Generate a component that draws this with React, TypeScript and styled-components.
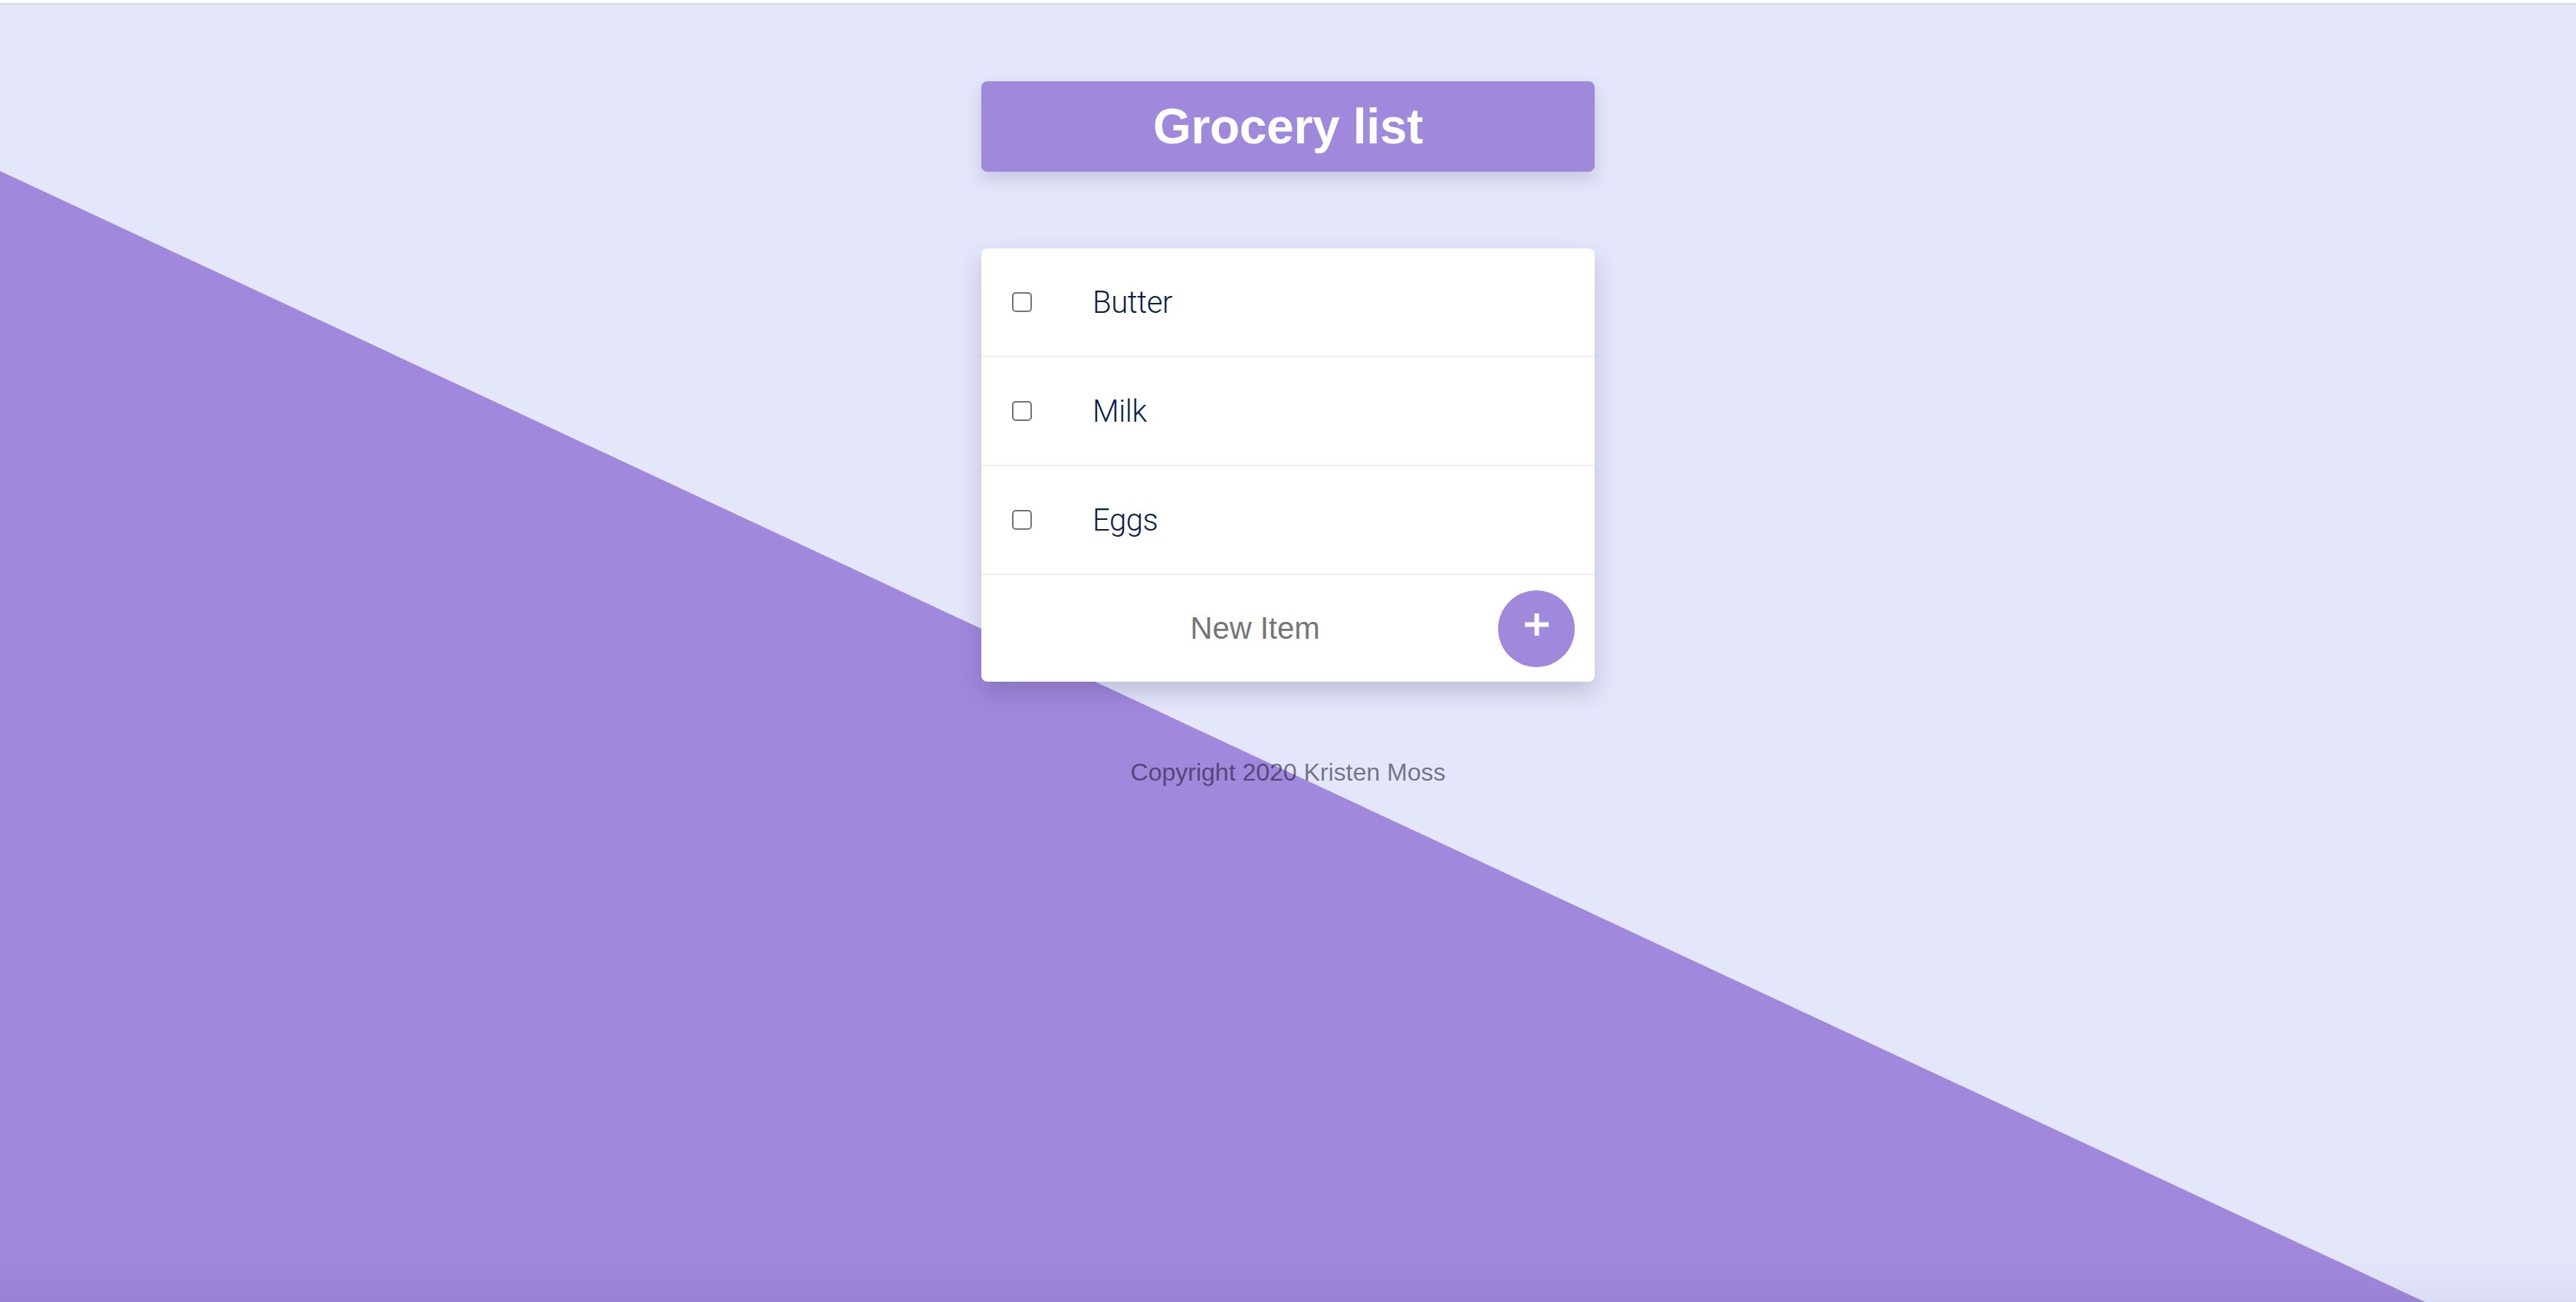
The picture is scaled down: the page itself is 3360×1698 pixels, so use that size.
import React from "react";
import styled, { createGlobalStyle } from "styled-components";

const GlobalStyle = createGlobalStyle`
  html, body {
    margin: 0;
    padding: 0;
    background: #e4e7fa;
  }
  * { box-sizing: border-box; }
`;

const Page = styled.div`
  position: relative;
  min-height: 100vh;
  overflow: hidden;
  background: #e4e7fa;
  font-family: "Liberation Sans", Arial, sans-serif;
  display: flex;
  flex-direction: column;

  &::before {
    content: "";
    position: absolute;
    inset: 0;
    background: #a088dc;
    clip-path: polygon(0 223px, 3163px 100%, 0 100%);
    z-index: 0;
  }

  &::after {
    content: "";
    position: absolute;
    left: 0;
    right: 0;
    bottom: 0;
    height: 60px;
    background: linear-gradient(to bottom, rgba(40, 30, 80, 0), rgba(40, 30, 80, 0.05));
    pointer-events: none;
    z-index: 0;
  }
`;

const TopEdge = styled.div`
  position: relative;
  z-index: 1;
  height: 6px;
  background: #ffffff;
  border-bottom: 2px solid #d8d9e3;
`;

const Main = styled.main`
  position: relative;
  z-index: 1;
  width: 800px;
  margin: 0 auto;
  padding-top: 100px;
  display: flex;
  flex-direction: column;
  gap: 100px;
`;

const TitleBar = styled.h1`
  margin: 0;
  height: 118px;
  display: flex;
  align-items: center;
  justify-content: center;
  background: #a088dc;
  border-radius: 8px;
  box-shadow: 0 10px 22px rgba(60, 60, 110, 0.18);
  color: #ffffff;
  font-family: "Liberation Sans", Arial, sans-serif;
  font-weight: 700;
  font-size: 64px;
  letter-spacing: -0.3px;
`;

const Card = styled.section`
  background: #ffffff;
  border-radius: 8px;
  box-shadow: 0 14px 30px rgba(50, 50, 100, 0.22);
  display: flex;
  flex-direction: column;
  overflow: hidden;
`;

const Row = styled.div<{ $last?: boolean }>`
  height: ${(p) => (p.$last ? "139px" : "142px")};
  display: flex;
  align-items: center;
  padding-left: 40px;
  padding-right: 26px;
  border-bottom: ${(p) => (p.$last ? "none" : "2px solid #f0f0f2")};
`;

const Check = styled.input`
  appearance: none;
  -webkit-appearance: none;
  margin: 0;
  width: 26px;
  height: 26px;
  border: 2px solid #767676;
  border-radius: 5px;
  background: #ffffff;
  flex: none;
`;

const ItemLabel = styled.span`
  margin-left: 79px;
  font-family: Roboto, "Liberation Sans", sans-serif;
  font-weight: 300;
  font-size: 40px;
  color: #0b1f47;
  letter-spacing: -0.4px;
`;

const NewItemInput = styled.input`
  flex: 1;
  min-width: 0;
  border: none;
  outline: none;
  background: transparent;
  text-align: center;
  font-family: "Liberation Sans", Arial, sans-serif;
  font-size: 40px;
  color: #333;
  padding: 0;

  &::placeholder {
    color: #757575;
  }
`;

const AddButton = styled.button`
  flex: none;
  width: 100px;
  height: 100px;
  border-radius: 50%;
  border: none;
  background: #a088dc;
  display: flex;
  align-items: center;
  justify-content: center;
  padding: 0 0 10px 0;
  cursor: pointer;
`;

const Footer = styled.footer`
  text-align: center;
  font-family: "Liberation Sans", Arial, sans-serif;
  font-size: 32px;
  line-height: 37px;
  color: rgba(15, 15, 35, 0.55);
`;

const PlusIcon = () => (
  <svg width="31" height="29" viewBox="0 0 31 29" aria-hidden="true">
    <rect x="12.5" y="0" width="6" height="29" fill="#ffffff" />
    <rect x="0" y="11.5" width="31" height="6" fill="#ffffff" />
  </svg>
);

const items = ["Butter", "Milk", "Eggs"];

export default function App() {
  return (
    <>
      <GlobalStyle />
      <Page>
        <TopEdge />
        <Main>
          <TitleBar>Grocery list</TitleBar>
          <Card>
            {items.map((item) => (
              <Row key={item}>
                <Check type="checkbox" aria-label={item} />
                <ItemLabel>{item}</ItemLabel>
              </Row>
            ))}
            <Row $last>
              <NewItemInput placeholder="New Item" />
              <AddButton aria-label="Add item">
                <PlusIcon />
              </AddButton>
            </Row>
          </Card>
          <Footer>Copyright 2020 Kristen Moss</Footer>
        </Main>
      </Page>
    </>
  );
}
